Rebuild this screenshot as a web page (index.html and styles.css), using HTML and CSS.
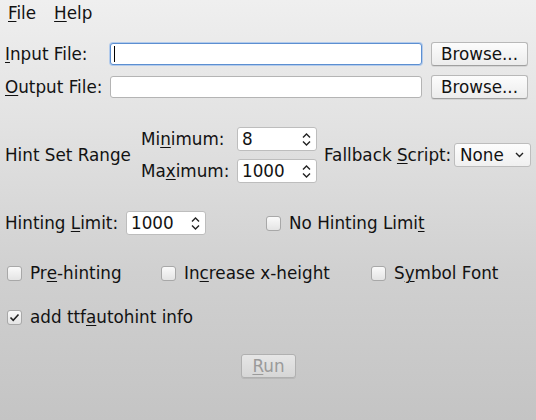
FILE: index.html
```html
<!DOCTYPE html>
<html>
<head>
<meta charset="utf-8">
<link rel="stylesheet" href="styles.css">
</head>
<body>
<div class="window">
  <div class="menubar">
    <span class="menu"><u>F</u>ile</span>
    <span class="menu"><u>H</u>elp</span>
  </div>
  <div class="files">
    <span class="label"><u>I</u>nput File:</span>
    <div class="entry focus"><span class="caret"></span></div>
    <button class="btn">Browse...</button>
    <span class="label"><u>O</u>utput File:</span>
    <div class="entry"></div>
    <button class="btn">Browse...</button>
  </div>
  <div class="range">
    <span class="range-label">Hint Set Range</span>
    <div class="minmax">
      <div class="mm-row"><span class="mm-label">Mi<u>n</u>imum:</span><div class="spin"><span>8</span><svg class="arrows" width="9" height="15" viewBox="0 0 9 15"><path d="M1 5.5 L4.5 2 L8 5.5 M1 9.5 L4.5 13 L8 9.5" fill="none" stroke="#222" stroke-width="1.4"/></svg></div></div>
      <div class="mm-row"><span class="mm-label">Ma<u>x</u>imum:</span><div class="spin"><span>1000</span><svg class="arrows" width="9" height="15" viewBox="0 0 9 15"><path d="M1 5.5 L4.5 2 L8 5.5 M1 9.5 L4.5 13 L8 9.5" fill="none" stroke="#222" stroke-width="1.4"/></svg></div></div>
    </div>
    <span class="fb-label">Fallback <u>S</u>cript:</span>
    <div class="select"><span>None</span><svg width="9" height="6" viewBox="0 0 9 6"><path d="M1 1 L4.5 4.5 L8 1" fill="none" stroke="#222" stroke-width="1.4"/></svg></div>
  </div>
  <div class="limit">
    <span class="limit-label">Hinting <u>L</u>imit:</span>
    <div class="spin"><span>1000</span><svg class="arrows" width="9" height="15" viewBox="0 0 9 15"><path d="M1 5.5 L4.5 2 L8 5.5 M1 9.5 L4.5 13 L8 9.5" fill="none" stroke="#222" stroke-width="1.4"/></svg></div>
    <label class="check nolimit"><span class="box"></span>No Hinting Limi<u>t</u></label>
  </div>
  <div class="checks">
    <label class="check c1"><span class="box"></span>Pr<u>e</u>-hinting</label>
    <label class="check c2"><span class="box"></span>In<u>c</u>rease x-height</label>
    <label class="check c3"><span class="box"></span>S<u>y</u>mbol Font</label>
  </div>
  <div class="info">
    <label class="check"><span class="box checked"><svg width="11" height="9" viewBox="0 0 11 9"><path d="M1.5 4.5 L4.2 7.3 L9.5 1.5" fill="none" stroke="#222" stroke-width="1.6"/></svg></span>add ttf<u>a</u>utohint info</label>
  </div>
  <div class="runrow">
    <button class="btn run" disabled><u>R</u>un</button>
  </div>
</div>
</body>
</html>
```
FILE: styles.css
```css
html, body {
  margin: 0;
  padding: 0;
}
body {
  width: 536px;
  height: 420px;
  overflow: hidden;
  font-family: "DejaVu Sans", sans-serif;
  font-size: 16.8px;
  line-height: 20px;
  color: #121212;
  white-space: nowrap;
  background: linear-gradient(to bottom, #efefef 0%, #e2e2e2 30%, #d0d0d0 65%, #c4c4c4 100%);
}
u {
  text-decoration: underline;
  text-decoration-thickness: 1px;
  text-underline-offset: 2px;
}
.window {
  display: flex;
  flex-direction: column;
}
.menubar {
  display: flex;
  gap: 18px;
  padding: 3px 0 0 8px;
  height: 22px;
}
.files {
  display: grid;
  grid-template-columns: 97px 312px 98px;
  column-gap: 8px;
  row-gap: 9px;
  align-items: center;
  padding: 17px 0 0 5px;
}
.files .btn {
  margin-left: 1px;
}
.entry {
  height: 22px;
  box-sizing: border-box;
  background: #fff;
  border: 1px solid #b4b4b4;
  border-radius: 3px;
  display: flex;
  align-items: center;
}
.entry.focus {
  border-color: #5c8fd1;
  box-shadow: 0 0 0 1px #b3cbeb;
}
.caret {
  width: 1px;
  height: 16px;
  background: #000;
  margin-left: 3px;
}
.btn {
  font-family: "DejaVu Sans", sans-serif;
  font-size: 16.8px;
  color: #121212;
  height: 24px;
  padding: 0;
  border: 1px solid #b8b8b8;
  border-bottom-color: #a0a0a0;
  border-radius: 3px;
  background: linear-gradient(to bottom, #fcfcfc, #ececec);
  box-shadow: 0 1px 0 rgba(0,0,0,0.08);
  line-height: 20px;
}
.range {
  display: flex;
  align-items: center;
  padding: 28px 0 0 5px;
}
.range-label {
  width: 136px;
  flex: none;
}
.minmax {
  display: flex;
  flex-direction: column;
  gap: 8px;
}
.mm-row {
  display: flex;
  align-items: center;
}
.mm-label {
  width: 96px;
  flex: none;
}
.spin {
  height: 24px;
  box-sizing: border-box;
  width: 80px;
  flex: none;
  background: #fff;
  border: 1px solid #bdbdbd;
  border-radius: 3px;
  display: flex;
  align-items: center;
  justify-content: space-between;
  padding: 0 5px 0 4px;
}
.fb-label {
  margin-left: 7px;
  width: 130px;
  flex: none;
}
.select {
  width: 77px;
  height: 24px;
  flex: none;
  box-sizing: border-box;
  border: 1px solid #bdbdbd;
  border-radius: 3px;
  background: linear-gradient(to bottom, #fdfdfd, #f0f0f0);
  display: flex;
  align-items: center;
  justify-content: space-between;
  padding: 0 6px 0 5px;
}
.limit {
  display: flex;
  align-items: center;
  padding: 28px 0 0 5px;
}
.limit-label {
  width: 121px;
  flex: none;
}
.check {
  display: flex;
  align-items: center;
}
.box {
  width: 15px;
  height: 15px;
  box-sizing: border-box;
  border: 1px solid #a8a8a8;
  border-radius: 3px;
  background: linear-gradient(to bottom, #fafafa, #e4e4e4);
  margin-right: 8px;
  display: flex;
  align-items: center;
  justify-content: center;
  flex: none;
}
.nolimit {
  margin-left: 60px;
}
.checks {
  display: flex;
  align-items: center;
  padding: 28px 0 0 7px;
}
.c1 { width: 154px; flex: none; }
.c2 { width: 210px; flex: none; }
.info {
  padding: 24px 0 0 7px;
}
.runrow {
  display: flex;
  padding: 27px 0 0 241px;
}
.run {
  width: 55px;
  height: 24px;
  color: #9a9a9a;
  background: linear-gradient(to bottom, #e6e6e6, #d6d6d6);
  border-color: #b0b0b0;
}
```
